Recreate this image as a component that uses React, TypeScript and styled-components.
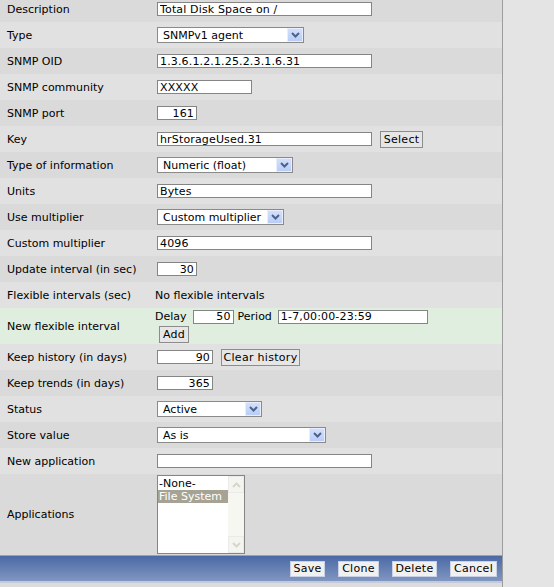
import styled, { createGlobalStyle } from "styled-components";

const GlobalStyle = createGlobalStyle`
  html, body {
    margin: 0;
    padding: 0;
    background: #e4e4e4;
    font-family: "DejaVu Sans", Verdana, sans-serif;
    font-size: 11px;
    color: #000;
    overflow: hidden;
  }
`;

const Panel = styled.div`
  width: 502px;
  height: 591px;
  margin-top: -4px;
  border-right: 1px solid #9c9c9c;
  background: #dcdcdc;
  display: flex;
  flex-direction: column;
  overflow: hidden;
`;

const Row = styled.div<{ $tone: "dark" | "light" | "green"; $h?: number }>`
  display: grid;
  grid-template-columns: 153px 1fr;
  align-items: center;
  flex: none;
  height: ${(p) => p.$h ?? 26}px;
  background: ${(p) =>
    p.$tone === "green" ? "#e0eedf" : p.$tone === "dark" ? "#dadada" : "#e1e1e1"};
`;

const Label = styled.div`
  padding-left: 7px;
  white-space: nowrap;
`;

const Value = styled.div`
  padding-left: 2px;
  display: flex;
  align-items: center;
  gap: 8px;
  white-space: nowrap;
`;

const TextInput = styled.input<{ $w: number; $right?: boolean }>`
  box-sizing: border-box;
  width: ${(p) => p.$w}px;
  height: 14px;
  margin: 0 0 0 2px;
  padding: 0 2px;
  border: 1px solid #858585;
  background: #fff;
  font: 11px "DejaVu Sans", Verdana, sans-serif;
  letter-spacing: 0.15px;
  color: #000;
  text-align: ${(p) => (p.$right ? "right" : "left")};
  outline: none;
`;

const SelectBox = styled.div<{ $w: number }>`
  box-sizing: border-box;
  width: ${(p) => p.$w}px;
  height: 16px;
  margin-left: 2px;
  border: 1px solid #8a8a8a;
  background: #fff;
  display: flex;
  align-items: center;
  justify-content: space-between;
  padding-left: 5px;
  overflow: hidden;
`;

const Arrow = styled.span`
  box-sizing: border-box;
  flex: none;
  width: 16px;
  height: 14px;
  background: linear-gradient(#d3e0fb, #b9cdf6);
  border: 1px solid #e8eefc;
  display: flex;
  align-items: center;
  justify-content: center;
`;

const Btn = styled.button<{ $w: number; $indent?: number }>`
  box-sizing: border-box;
  width: ${(p) => p.$w}px;
  height: 17px;
  margin-left: ${(p) => p.$indent ?? 0}px;
  padding: 0;
  border: 1px solid #8c8c8c;
  background: #e6e6e6;
  font: 11px "DejaVu Sans", Verdana, sans-serif;
  color: #000;
  letter-spacing: 0.3px;
`;

const FlexBlock = styled.div`
  display: flex;
  flex-direction: column;
  gap: 2px;
  padding-left: 2px;
`;

const FlexLine = styled.div`
  display: flex;
  align-items: center;
  gap: 4px;
  white-space: nowrap;
`;

const ListBox = styled.div`
  box-sizing: border-box;
  width: 88px;
  height: 79px;
  margin-left: 2px;
  border: 1px solid #858585;
  background: #fff;
  display: flex;
`;

const ListItems = styled.div`
  flex: 1;
  padding-top: 1px;
`;

const ListItem = styled.div<{ $sel?: boolean }>`
  height: 13px;
  line-height: 13px;
  padding-left: 1px;
  background: ${(p) => (p.$sel ? "#a6a394" : "transparent")};
  color: ${(p) => (p.$sel ? "#fff" : "#000")};
`;

const ScrollBar = styled.div`
  width: 16px;
  background: #f7f7f1;
  display: flex;
  flex-direction: column;
  justify-content: space-between;
`;

const ScrollBtn = styled.div`
  height: 15px;
  border: 1px solid #eaeaea;
  background: #f5f5ef;
  display: flex;
  align-items: center;
  justify-content: center;
`;

const Footer = styled.div`
  flex: none;
  height: 25px;
  border-top: 1px solid #8fa2c9;
  background: linear-gradient(#4a69a5, #8196c2);
  display: flex;
  justify-content: flex-end;
  align-items: center;
  gap: 13px;
  padding-right: 5px;
`;

const FooterBtn = styled.button<{ $w: number }>`
  box-sizing: border-box;
  width: ${(p) => p.$w}px;
  height: 16px;
  padding: 0;
  border: 1px solid #c9d2e4;
  background: #f0f0f0;
  font: 11px "DejaVu Sans", Verdana, sans-serif;
  color: #000;
  letter-spacing: 0.3px;
`;

const Bottom = styled.div`
  flex: 1;
  border-top: 2px solid #c5cbd6;
  background: #dcdcdc;
`;

function Chevron({ up, color = "#4d6189" }: { up?: boolean; color?: string }) {
  return (
    <svg width="9" height="6" viewBox="0 0 9 6">
      <path
        d={up ? "M1 5 L4.5 1.5 L8 5" : "M1 1 L4.5 4.5 L8 1"}
        fill="none"
        stroke={color}
        strokeWidth="2"
      />
    </svg>
  );
}

function Select({ w, text }: { w: number; text: string }) {
  return (
    <SelectBox $w={w}>
      <span>{text}</span>
      <Arrow>
        <Chevron />
      </Arrow>
    </SelectBox>
  );
}

export default function App() {
  return (
    <>
      <GlobalStyle />
      <Panel>
        <Row $tone="dark">
          <Label>Description</Label>
          <Value><TextInput $w={215} defaultValue="Total Disk Space on /" /></Value>
        </Row>
        <Row $tone="light">
          <Label>Type</Label>
          <Value><Select w={147} text="SNMPv1 agent" /></Value>
        </Row>
        <Row $tone="dark">
          <Label>SNMP OID</Label>
          <Value><TextInput $w={215} defaultValue="1.3.6.1.2.1.25.2.3.1.6.31" /></Value>
        </Row>
        <Row $tone="light">
          <Label>SNMP community</Label>
          <Value><TextInput $w={95} defaultValue="XXXXX" /></Value>
        </Row>
        <Row $tone="dark">
          <Label>SNMP port</Label>
          <Value><TextInput $w={40} $right defaultValue="161" /></Value>
        </Row>
        <Row $tone="light">
          <Label>Key</Label>
          <Value>
            <TextInput $w={215} defaultValue="hrStorageUsed.31" />
            <Btn $w={43}>Select</Btn>
          </Value>
        </Row>
        <Row $tone="dark">
          <Label>Type of information</Label>
          <Value><Select w={136} text="Numeric (float)" /></Value>
        </Row>
        <Row $tone="light">
          <Label>Units</Label>
          <Value><TextInput $w={215} defaultValue="Bytes" /></Value>
        </Row>
        <Row $tone="dark">
          <Label>Use multiplier</Label>
          <Value><Select w={127} text="Custom multiplier" /></Value>
        </Row>
        <Row $tone="light">
          <Label>Custom multiplier</Label>
          <Value><TextInput $w={215} defaultValue="4096" /></Value>
        </Row>
        <Row $tone="dark">
          <Label>Update interval (in sec)</Label>
          <Value><TextInput $w={40} $right defaultValue="30" /></Value>
        </Row>
        <Row $tone="light">
          <Label>Flexible intervals (sec)</Label>
          <Value>No flexible intervals</Value>
        </Row>
        <Row $tone="green" $h={36}>
          <Label>New flexible interval</Label>
          <FlexBlock>
            <FlexLine>
              <span>Delay</span>
              <TextInput $w={41} $right defaultValue="50" />
              <span>Period</span>
              <TextInput $w={150} defaultValue="1-7,00:00-23:59" />
            </FlexLine>
            <FlexLine>
              <Btn $w={30} $indent={4}>Add</Btn>
            </FlexLine>
          </FlexBlock>
        </Row>
        <Row $tone="light">
          <Label>Keep history (in days)</Label>
          <Value>
            <TextInput $w={56} $right defaultValue="90" />
            <Btn $w={79}>Clear history</Btn>
          </Value>
        </Row>
        <Row $tone="dark">
          <Label>Keep trends (in days)</Label>
          <Value><TextInput $w={56} $right defaultValue="365" /></Value>
        </Row>
        <Row $tone="light">
          <Label>Status</Label>
          <Value><Select w={105} text="Active" /></Value>
        </Row>
        <Row $tone="dark">
          <Label>Store value</Label>
          <Value><Select w={169} text="As is" /></Value>
        </Row>
        <Row $tone="light">
          <Label>New application</Label>
          <Value><TextInput $w={215} defaultValue="" /></Value>
        </Row>
        <Row $tone="dark" $h={81}>
          <Label>Applications</Label>
          <Value>
            <ListBox>
              <ListItems>
                <ListItem>-None-</ListItem>
                <ListItem $sel>File System</ListItem>
              </ListItems>
              <ScrollBar>
                <ScrollBtn><Chevron up color="#d6d6cc" /></ScrollBtn>
                <ScrollBtn><Chevron color="#d6d6cc" /></ScrollBtn>
              </ScrollBar>
            </ListBox>
          </Value>
        </Row>
        <Footer>
          <FooterBtn $w={35}>Save</FooterBtn>
          <FooterBtn $w={41}>Clone</FooterBtn>
          <FooterBtn $w={45}>Delete</FooterBtn>
          <FooterBtn $w={47}>Cancel</FooterBtn>
        </Footer>
        <Bottom />
      </Panel>
    </>
  );
}
